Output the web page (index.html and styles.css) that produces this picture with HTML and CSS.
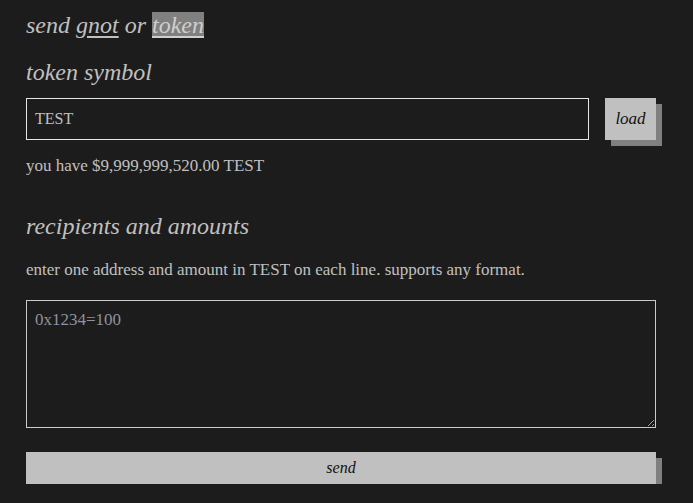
FILE: index.html
```html
<!DOCTYPE html>
<html>
<head>
<meta charset="utf-8">
<link rel="stylesheet" href="styles.css">
</head>
<body>
<div class="page">
  <h1 class="title">send <a class="tab">gnot</a> or <a class="tab tab-active">token</a></h1>
  <h2 class="heading heading-symbol">token symbol</h2>
  <div class="symbol-row">
    <input class="field" type="text" value="TEST">
    <button class="btn btn-load">load</button>
  </div>
  <p class="balance">you have $9,999,999,520.00 TEST</p>
  <h2 class="heading heading-recipients">recipients and amounts</h2>
  <p class="hint">enter one address and amount in TEST on each line. supports any format.</p>
  <textarea class="recipients" placeholder="0x1234=100"></textarea>
  <button class="btn btn-send">send</button>
</div>
</body>
</html>
```
FILE: styles.css
```css
html, body {
  margin: 0;
  padding: 0;
  background: #1c1c1c;
}
body {
  color: #c0c0c0;
  font-family: "Liberation Serif", "DejaVu Serif", serif;
  font-size: 17px;
}
.page {
  width: 630px;
  padding: 0 26px;
}
.title {
  margin: 11px 0 0;
  font-size: 24px;
  line-height: 28px;
  font-style: italic;
  font-weight: normal;
}
.tab {
  color: #c0c0c0;
  text-decoration: underline;
  text-underline-offset: 3px;
}
.tab-active {
  background: #808080;
  color: #cfcfcf;
}
.heading {
  font-size: 24px;
  line-height: 28px;
  font-style: italic;
  font-weight: normal;
}
.heading-symbol {
  margin: 19px 0 0;
}
.heading-recipients {
  margin: 36px 0 0;
}
.symbol-row {
  margin-top: 12px;
  display: flex;
  gap: 16px;
  align-items: stretch;
  height: 42px;
}
.field {
  flex: 1;
  box-sizing: border-box;
  height: 42px;
  margin: 0;
  padding: 0 8px;
  background: #1c1c1c;
  border: 1px solid #e6e6e6;
  color: #c0c0c0;
  font-family: "Liberation Serif", serif;
  font-size: 16px;
  outline: none;
}
.btn {
  margin: 0;
  border: none;
  background: #c0c0c0;
  color: #111;
  font-family: "Liberation Serif", serif;
  font-style: italic;
  font-size: 17px;
  box-shadow: 6px 6px 0 #808080;
  padding: 0;
}
.btn-load {
  width: 51px;
  height: 42px;
}
.balance {
  margin: 16px 0 0;
  line-height: 20px;
}
.hint {
  margin: 20px 0 0;
  line-height: 20px;
}
.recipients {
  display: block;
  margin-top: 20px;
  width: 630px;
  height: 128px;
  box-sizing: border-box;
  padding: 9px 8px;
  background: #1c1c1c;
  border: 1px solid #cacaca;
  color: #c0c0c0;
  font-family: "Liberation Serif", serif;
  font-size: 17px;
  outline: none;
}
.recipients::placeholder {
  color: #8c939e;
}
.btn-send {
  display: block;
  margin-top: 24px;
  width: 630px;
  height: 32px;
  font-size: 16px;
}
```
